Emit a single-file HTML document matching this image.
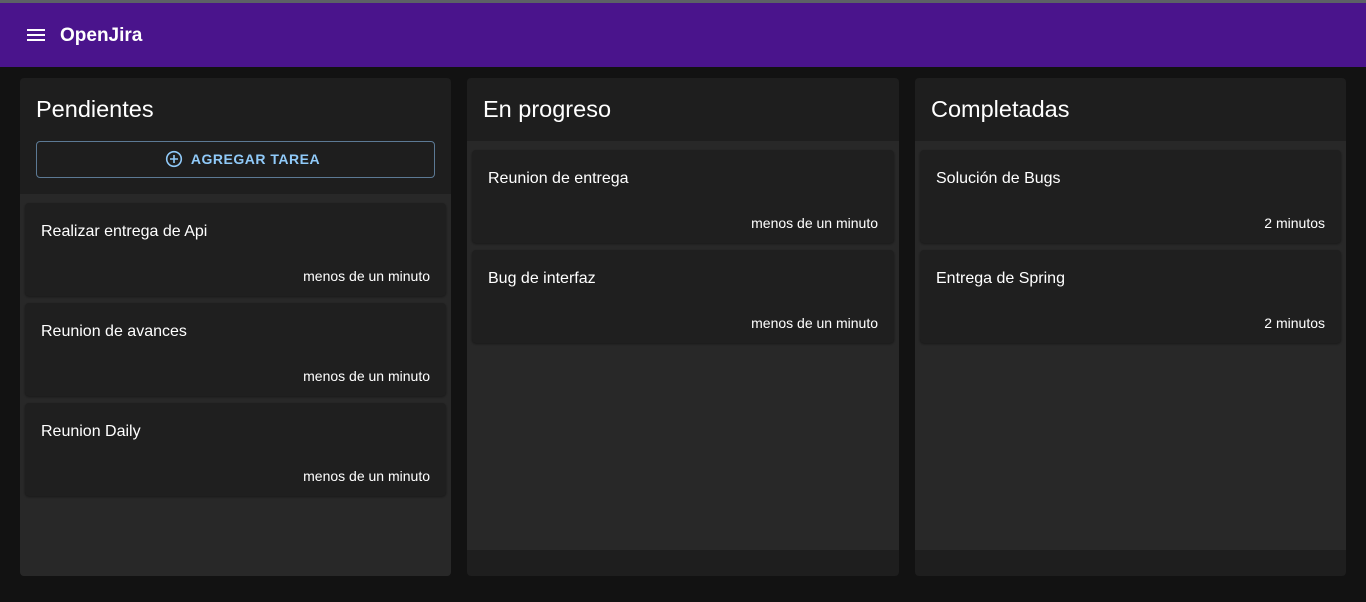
<!DOCTYPE html>
<html><head><meta charset="utf-8"><style>
*{margin:0;padding:0;box-sizing:border-box}
body{width:1366px;height:602px;background:#121212;font-family:"Liberation Sans",Arial,sans-serif;color:#fff;position:relative;overflow:hidden}
.top{position:absolute;left:0;top:0;width:1366px;height:3px;background:#5c6166}
.bar{position:absolute;left:0;top:3px;width:1366px;height:64px;background:#4a148c}
.bar .t{position:absolute;left:60px;top:22px;font-size:19px;font-weight:bold}
.ham{position:absolute;left:27px;width:18px;height:2px;background:#fff}
.col{position:absolute;top:78px;width:431px;height:498px;background:#1e1e1e;border-radius:4px;overflow:hidden}
.col h2{position:absolute;left:16px;top:18px;font-size:23.5px;font-weight:normal}
.list{position:absolute;left:0;right:0;background:#282828}
.card{position:absolute;left:5px;right:5px;height:93px;background:#1f1f1f;border-radius:4px;box-shadow:0 1px 2px rgba(0,0,0,.4)}
.card .n{position:absolute;left:16px;top:20px;font-size:16px}
.card .m{position:absolute;right:16px;top:65px;font-size:14px}
.btn{position:absolute;left:16px;top:63px;width:399px;height:37px;border:1px solid #5c7994;border-radius:4px;color:#90caf9;font-size:14px;font-weight:bold;text-align:center;line-height:35px;letter-spacing:.5px;padding-left:14px}
</style></head><body>
<div class="top"></div>
<div class="bar"><div class="ham" style="top:26px"></div><div class="ham" style="top:31px"></div><div class="ham" style="top:36px"></div><div class="t">OpenJira</div></div>

<div class="col" style="left:20px">
<h2>Pendientes</h2>
<div class="btn"><svg width="18" height="18" viewBox="0 0 18 18" style="vertical-align:-4px;margin-right:8px"><circle cx="9" cy="9" r="7.3" fill="none" stroke="#90caf9" stroke-width="1.6"/><path d="M9 5v8M5 9h8" stroke="#90caf9" stroke-width="1.6"/></svg>AGREGAR TAREA</div>
<div class="list" style="top:116px;bottom:0">
<div class="card" style="top:9px"><div class="n">Realizar entrega de Api</div><div class="m">menos de un minuto</div></div>
<div class="card" style="top:109px"><div class="n">Reunion de avances</div><div class="m">menos de un minuto</div></div>
<div class="card" style="top:209px"><div class="n">Reunion Daily</div><div class="m">menos de un minuto</div></div>
</div></div>

<div class="col" style="left:467px;width:432px">
<h2>En progreso</h2>
<div class="list" style="top:63px;height:409px">
<div class="card" style="top:9px"><div class="n">Reunion de entrega</div><div class="m">menos de un minuto</div></div>
<div class="card" style="top:109px"><div class="n">Bug de interfaz</div><div class="m">menos de un minuto</div></div>
</div></div>

<div class="col" style="left:915px">
<h2>Completadas</h2>
<div class="list" style="top:63px;height:409px">
<div class="card" style="top:9px"><div class="n">Solución de Bugs</div><div class="m">2 minutos</div></div>
<div class="card" style="top:109px"><div class="n">Entrega de Spring</div><div class="m">2 minutos</div></div>
</div></div>
</body></html>
